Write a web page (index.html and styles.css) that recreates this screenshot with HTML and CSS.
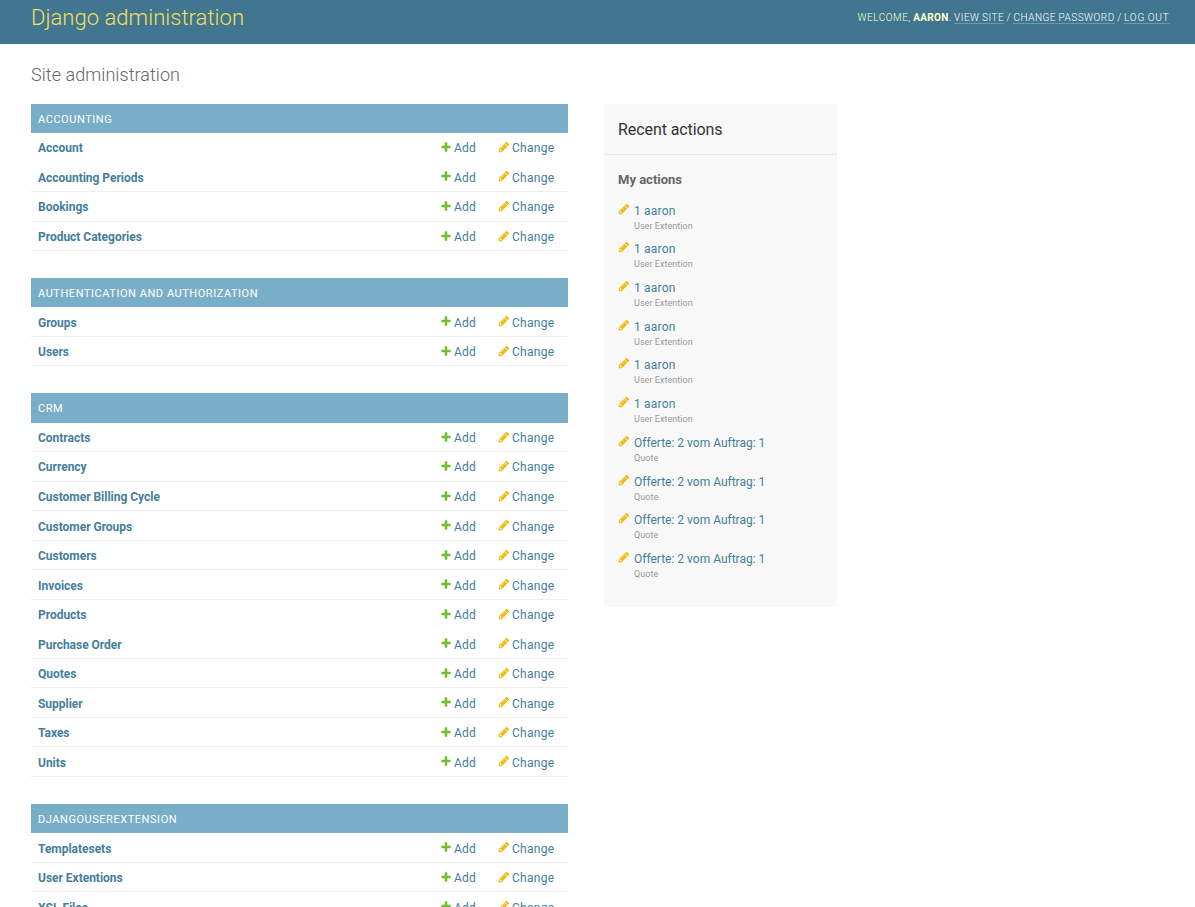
FILE: index.html
```html
<!DOCTYPE html>
<html lang="en">
<head>
<meta charset="utf-8">
<title>Site administration</title>
<link rel="stylesheet" href="styles.css">
</head>
<body>
<svg class="defs" aria-hidden="true">
  <symbol id="add" viewBox="0 0 1792 1792"><path fill="#70bf2b" d="M1600 796v192q0 40-28 68t-68 28h-416v416q0 40-28 68t-68 28h-192q-40 0-68-28t-28-68v-416h-416q-40 0-68-28t-28-68v-192q0-40 28-68t68-28h416v-416q0-40 28-68t68-28h192q40 0 68 28t28 68v416h416q40 0 68 28t28 68z"/></symbol>
  <symbol id="edit" viewBox="0 0 1792 1792"><path fill="#efb80b" d="M491 1536l91-91-235-235-91 91v107h128v128h107zm523-928q0-22-22-22-10 0-17 7l-542 542q-7 7-7 17 0 22 22 22 10 0 17-7l542-542q7-7 7-17zm-54-192l416 416-832 832h-416v-416zm683 96q0 53-37 90l-166 166-416-416 166-165q36-38 90-38 53 0 91 38l235 234q37 39 37 91z"/></symbol>
</svg>
<header class="header">
  <h1 class="brand">Django administration</h1>
  <div class="user-tools">Welcome, <strong>Aaron</strong>. <a>View site</a> / <a>Change password</a> / <a class="logout">Log out</a></div>
</header>
<main class="content">
  <h2 class="page-title">Site administration</h2>
  <div class="columns">
    <div class="modules" id="modules"></div>
    <aside class="recent">
      <h2 class="recent-title">Recent actions</h2>
      <h3 class="recent-sub">My actions</h3>
      <ul class="actions" id="actions"></ul>
    </aside>
  </div>
</main>
<script src="app.js"></script>
</body>
</html>
```
FILE: app.js
```js
const apps = [
  ["Accounting", ["Account", "Accounting Periods", "Bookings", "Product Categories"]],
  ["Authentication and Authorization", ["Groups", "Users"]],
  ["CRM", ["Contracts", "Currency", "Customer Billing Cycle", "Customer Groups", "Customers", "Invoices", "Products", "Purchase Order", "Quotes", "Supplier", "Taxes", "Units"]],
  ["Djangouserextension", ["Templatesets", "User Extentions", "XSL Files"]]
];
const borderless = ["Account", "Products"];
const icon = (name) => `<svg class="icon"><use href="#${name}"/></svg>`;

document.getElementById("modules").innerHTML = apps.map(([title, models]) => `
  <section class="module">
    <h2 class="caption">${title}</h2>
    ${models.map((m) => `<div class="row${borderless.includes(m) ? " row-plain" : ""}">
      <a class="model">${m}</a>
      <a class="add">${icon("add")}<span>Add</span></a>
      <a class="change">${icon("edit")}<span>Change</span></a>
    </div>`).join("")}
  </section>`).join("");

const actions = [
  ...Array(6).fill(["1 aaron", "User Extention", "user"]),
  ...Array(4).fill(["Offerte: 2 vom Auftrag: 1", "Quote", "quote"])
];
document.getElementById("actions").innerHTML = actions.map(([label, type, cls]) => `
  <li class="action ${cls}">${icon("edit")}<div><a class="action-link">${label}</a><span class="kind">${type}</span></div></li>`).join("");
```
FILE: styles.css
```css
* { box-sizing: border-box; }
body {
  margin: 0;
  height: 907px;
  overflow: hidden;
  background: #fff;
  color: #333;
  font-family: Roboto, "Liberation Sans", sans-serif;
  font-size: 12px;
}
h1, h2, h3, ul { margin: 0; padding: 0; font-weight: 400; }
.defs { display: none; }
.header {
  height: 44px;
  padding: 5px 25.5px 0 31px;
  display: flex;
  justify-content: space-between;
  background: #417690;
}
.brand { color: #f5dd5d; font-size: 22px; line-height: 26px; font-weight: 300; letter-spacing: .04px; }
.user-tools {
  padding-top: 6px;
  color: #ffc;
  font-size: 10px;
  line-height: 14px;
  font-weight: 300;
  letter-spacing: .5px;
  word-spacing: -.5px;
  text-transform: uppercase;
  white-space: nowrap;
}
.user-tools strong { font-weight: 700; letter-spacing: .35px; }
.user-tools a { color: #fff; border-bottom: 1px solid rgba(255, 255, 255, .25); }
.user-tools .logout { letter-spacing: .8px; }
.content { padding: 19px 31px 0; }
.page-title { height: 40.6px; color: #666; font-size: 18px; line-height: 24px; font-weight: 300; letter-spacing: .06px; }
.columns { display: flex; align-items: flex-start; gap: 36px; }
.modules { width: 537px; }
.module { margin-bottom: 26.9px; }
.caption {
  height: 29.35px;
  padding: 1px 7px 0;
  background: #79aec8;
  color: #fff;
  font-size: 11px;
  line-height: 29px;
  letter-spacing: .55px;
  text-transform: uppercase;
}
.row {
  display: flex;
  align-items: center;
  height: 29.54px;
  padding-left: 7px;
  border-bottom: 1px solid #eee;
  color: #447e9b;
}
.row-plain { border-bottom-color: transparent; }
.model { flex: 1; font-weight: 700; padding-top: 2.2px; letter-spacing: -.02px; }
.add, .change { display: flex; align-items: center; }
.add span, .change span { padding-top: 2.2px; letter-spacing: .2px; }
.change span { margin-left: .5px; letter-spacing: .27px; }
.add { width: 57.5px; }
.change { width: 70.5px; }
.icon { flex: none; width: 12px; height: 12px; margin-right: 2px; }
.row .icon { position: relative; top: -.3px; }
.recent { width: 233px; height: 503px; background: #f8f8f8; }
.recent-title {
  height: 51px;
  padding: 16px 14px 0;
  border-bottom: 1px solid #eaeaea;
  font-size: 16px;
  line-height: 20px;
  letter-spacing: -.08px;
}
.recent-sub { padding: 17px 14px 12px; color: #666; font-size: 13px; line-height: 16px; font-weight: 700; }
.actions { padding: 1.1px 14px; list-style: none; }
.action { display: flex; height: 38.7px; }
.action .icon { margin-right: 4px; margin-top: 2px; }
.action-link { display: block; color: #447e9b; line-height: 18px; padding-top: 1px; }
.user .action-link { letter-spacing: .2px; }
.kind { display: block; color: #999; font-size: 9px; line-height: 12px; letter-spacing: .05px; }
```
